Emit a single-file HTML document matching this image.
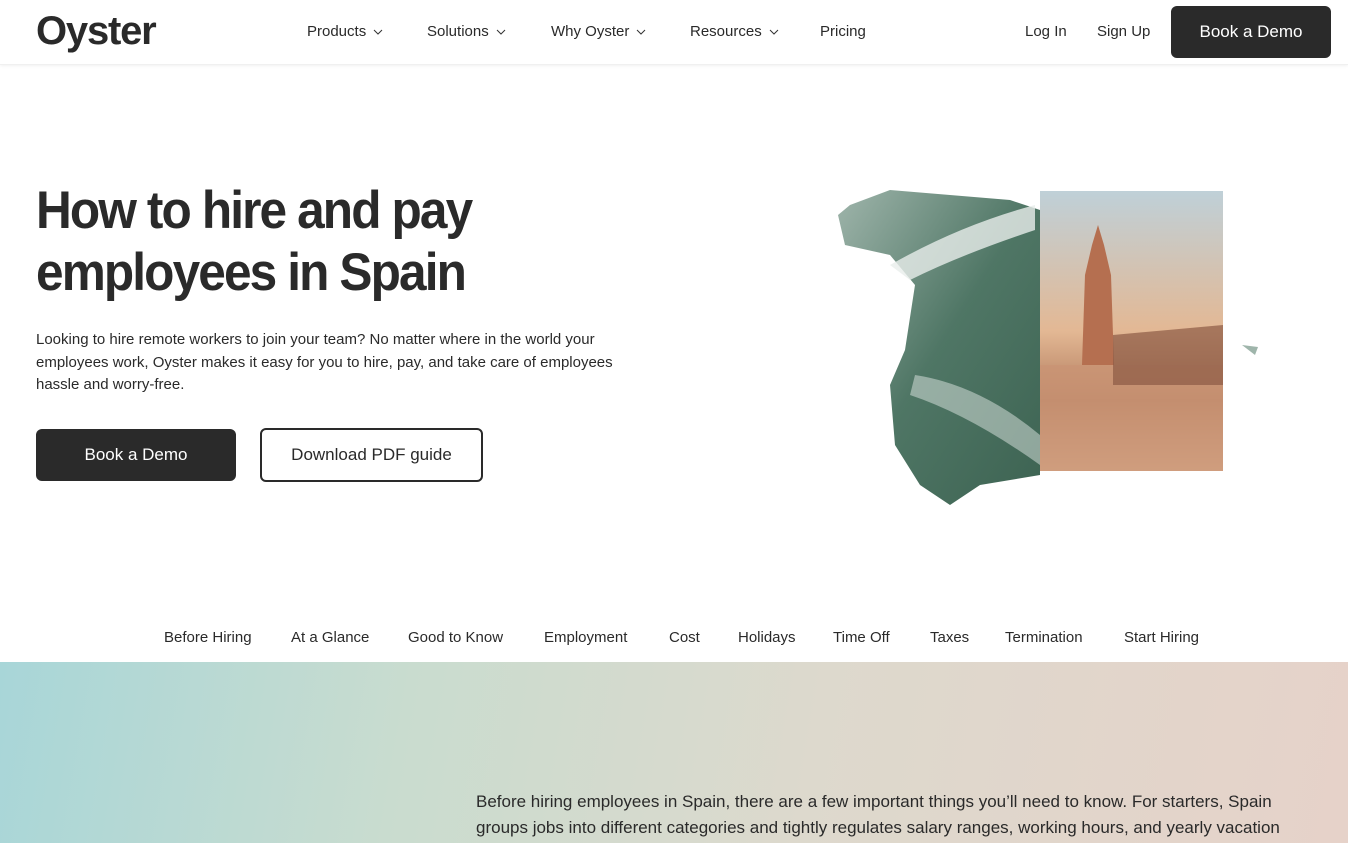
<!DOCTYPE html>
<html><head><meta charset="utf-8"><style>
*{margin:0;padding:0;box-sizing:border-box}
body{width:1348px;height:843px;overflow:hidden;font-family:"Liberation Sans",sans-serif;color:#2a2a2a;background:#fff;position:relative}
.hdr{position:absolute;top:0;left:0;width:1348px;height:65px;background:#fff;box-shadow:0 1px 3px rgba(0,0,0,.06);border-bottom:1px solid #f0f0f0}
.logo{position:absolute;left:36px;top:9px;font-size:40px;font-weight:bold;letter-spacing:-1.2px;color:#2a2a2a}
.nav{position:absolute;top:23px;font-size:15px;color:#2a2a2a}
.nav svg{margin-left:7px;vertical-align:middle}
.btn{position:absolute;border-radius:6px;font-size:17px;display:flex;align-items:center;justify-content:center}
h1{position:absolute;left:36px;top:180px;font-size:53px;line-height:62px;font-weight:bold;letter-spacing:-2px;color:#2a2a2a;transform:scaleX(.935);transform-origin:left top;white-space:nowrap}
.p{position:absolute;left:36px;top:329px;width:616px;font-size:15px;line-height:22.5px;color:#2a2a2a}
.tabs{position:absolute;top:629px;font-size:15px;color:#2a2a2a}
.grad{position:absolute;left:0;top:662px;width:1348px;height:181px;background:linear-gradient(100deg,#a8d6d8 0%,#c9dccf 30%,#ddd9cd 60%,#e6d2c9 100%)}
.intro{position:absolute;left:476px;top:789px;width:845px;font-size:17px;line-height:26px;color:#2a2a2a}
</style></head><body>
<div class="hdr">
<div class="logo">Oyster</div>
<div class="nav" style="left:307px">Products<svg width="10" height="6"><path d="M1 1l4 4 4-4" stroke="#333" fill="none"/></svg></div>
<div class="nav" style="left:427px">Solutions<svg width="10" height="6"><path d="M1 1l4 4 4-4" stroke="#333" fill="none"/></svg></div>
<div class="nav" style="left:551px">Why Oyster<svg width="10" height="6"><path d="M1 1l4 4 4-4" stroke="#333" fill="none"/></svg></div>
<div class="nav" style="left:690px">Resources<svg width="10" height="6"><path d="M1 1l4 4 4-4" stroke="#333" fill="none"/></svg></div>
<div class="nav" style="left:820px;top:23px">Pricing</div>
<div class="nav" style="left:1025px;top:23px">Log In</div>
<div class="nav" style="left:1097px;top:23px">Sign Up</div>
<div class="btn" style="left:1171px;top:6px;width:160px;height:52px;background:#2a2a2a;color:#fff">Book a Demo</div>
</div>
<h1>How to hire and pay<br>employees in Spain</h1>
<div class="p">Looking to hire remote workers to join your team? No matter where in the world your employees work, Oyster makes it easy for you to hire, pay, and take care of employees hassle and worry-free.</div>
<div class="btn" style="left:36px;top:429px;width:200px;height:52px;background:#2a2a2a;color:#fff">Book a Demo</div>
<div class="btn" style="left:260px;top:428px;width:223px;height:54px;border:2px solid #2a2a2a;color:#2a2a2a">Download PDF guide</div>
<svg style="position:absolute;left:830px;top:185px" width="440" height="325">
<defs><linearGradient id="g" x1="0" y1="0" x2="1" y2="1"><stop offset="0" stop-color="#9fb5ab"/><stop offset=".5" stop-color="#4f7665"/><stop offset="1" stop-color="#3d6352"/></linearGradient>
<linearGradient id="s" x1="0" y1="0" x2="0" y2="1"><stop offset="0" stop-color="#bfd0d8"/><stop offset=".5" stop-color="#e3b894"/><stop offset=".75" stop-color="#b07a5c"/><stop offset="1" stop-color="#e8c4a4"/></linearGradient></defs>
<path d="M20 20 L60 5 L120 10 L180 15 L210 25 L210 290 L150 300 L120 320 L90 300 L65 260 L60 200 L75 165 L85 100 L60 70 L15 60 L8 30Z" fill="url(#g)"/>
<path d="M60 80 Q130 40 205 20 L205 45 Q130 70 80 95Z" fill="#e8eeeb" opacity=".8"/>
<path d="M85 190 Q150 200 210 250 L210 280 Q140 230 80 210Z" fill="#dfe7e3" opacity=".5"/>
<rect x="210" y="6" width="183" height="280" fill="url(#s)"/>
<path d="M255 90 L262 60 L268 40 L274 60 L281 90 L284 180 L252 180Z" fill="#b56f50"/>
<rect x="210" y="180" width="183" height="106" fill="#c99474" opacity=".8"/>
<path d="M283 150 L393 140 L393 200 L283 200Z" fill="#8b5a44" opacity=".7"/>
<path d="M412 160 L428 162 L425 170Z" fill="#9fb5ab"/>
</svg>
<div class="tabs" style="left:164px">Before Hiring</div>
<div class="tabs" style="left:291px">At a Glance</div>
<div class="tabs" style="left:408px">Good to Know</div>
<div class="tabs" style="left:544px">Employment</div>
<div class="tabs" style="left:669px">Cost</div>
<div class="tabs" style="left:738px">Holidays</div>
<div class="tabs" style="left:833px">Time Off</div>
<div class="tabs" style="left:930px">Taxes</div>
<div class="tabs" style="left:1005px">Termination</div>
<div class="tabs" style="left:1124px">Start Hiring</div>
<div class="grad"></div>
<div class="intro">Before hiring employees in Spain, there are a few important things you’ll need to know. For starters, Spain groups jobs into different categories and tightly regulates salary ranges, working hours, and yearly vacation</div>
</body></html>
